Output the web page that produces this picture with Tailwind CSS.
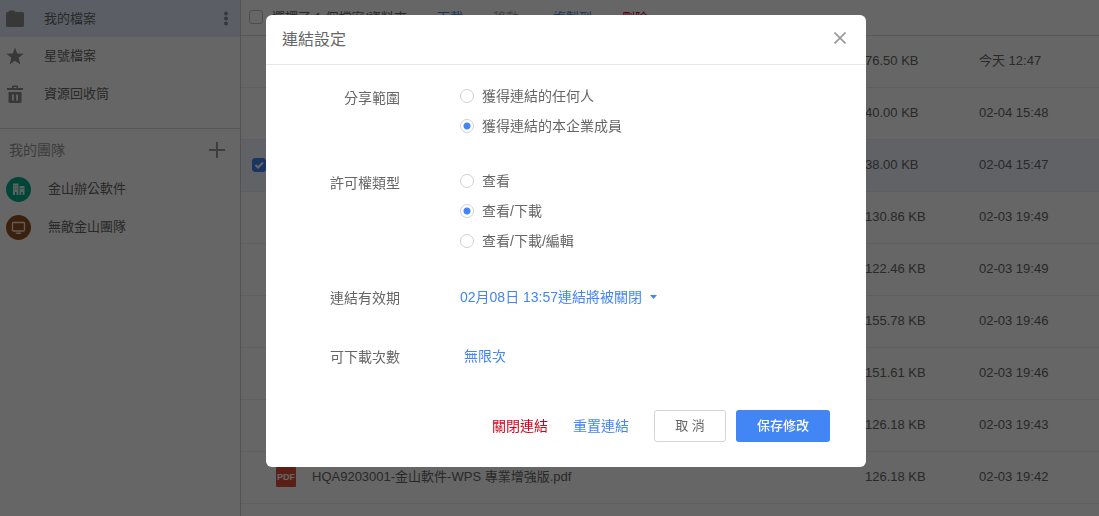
<!DOCTYPE html>
<html lang="zh-Hant">
<head>
<meta charset="utf-8">
<title>我的檔案</title>
<script src="https://cdn.jsdelivr.net/npm/@tailwindcss/browser@4"></script>
</head>
<body class="h-screen overflow-hidden bg-white font-['Liberation_Sans','Noto_Sans_CJK_TC',sans-serif] text-[13px] text-[#666]">
<div class="flex h-full overflow-hidden">
  <aside class="w-60 shrink-0">
    <nav class="border-b border-[#d8d8d8] pb-[15px]">
      <a href="#" class="flex h-[37px] items-center bg-[#e3eefd] pl-1.5 pr-2.5">
        <svg class="mr-5 size-[18px]" viewBox="0 0 18 18" fill="#8c8c8c"><path d="M0 3.500Q0 2 1.500 2h.5l2-1.500h4L9.500 2h7Q18 2 18 3.500v12q0 1.500-1.500 1.500h-15Q0 17 0 15.500z"/></svg>
        <span class="flex-1">我的檔案</span>
        <svg class="h-4 w-2" viewBox="0 0 8 16" fill="#8c8c8c"><circle cx="4" cy="2.500" r="2"/><circle cx="4" cy="7.500" r="2"/><circle cx="4" cy="12.500" r="2"/></svg>
      </a>
      <a href="#" class="flex h-[38px] items-center pl-1.5">
        <svg class="mr-5 size-[18px]" viewBox="0 0 18 18" fill="#8c8c8c"><path d="M9 .5l2.200 6 6.500.3-5.100 4L14.400 17.500 9 13.700l-5.400 3.800 1.800-6.700L.3 6.800l6.500-.3z"/></svg>
        <span>星號檔案</span>
      </a>
      <a href="#" class="flex h-[38px] items-center pl-1.5">
        <svg class="mr-5 size-[18px]" viewBox="0 0 18 18" fill="#8c8c8c"><path fill-rule="evenodd" d="M1 3h5V1.500Q6 .5 7 .5h4q1 0 1 1V3h5v2H1zM7.500 2v1h3V2zM2.500 7h13v9.500q0 1.500-1.500 1.500H4q-1.500 0-1.500-1.500zM6 9.500v6h1.800v-6zM10.200 9.500v6H12v-6z"/></svg>
        <span>資源回收筒</span>
      </a>
    </nav>
    <div class="flex h-[41px] items-center justify-between pl-[9px] pr-[15px] text-sm text-[#999]">
      <h2>我的團隊</h2>
      <button type="button" aria-label="新增團隊"><svg class="size-4" viewBox="0 0 16 16" stroke="#999" stroke-width="2"><path d="M8 0v16M0 8h16"/></svg></button>
    </div>
    <a href="#" class="flex h-[38px] items-center pl-1.5">
      <svg class="mr-[17px] size-[25px]" viewBox="0 0 25 25"><circle cx="12.500" cy="12.500" r="12.500" fill="#00ad8a"/><path fill="#e4f5f0" fill-rule="evenodd" d="M7 6.500h5.500V18H7zM13.500 9h5v9h-5zM8 8.500v1h1v-1zM10.500 8.500v1h1v-1zM8 11.500v1h1v-1zM10.500 11.500v1h1v-1zM9 15v3h1.500v-3zM14.500 11v1h1v-1zM16.500 11v1h1v-1zM15.200 15v3h1.500v-3z"/></svg>
      <span>金山辦公軟件</span>
    </a>
    <a href="#" class="flex h-[38px] items-center pl-1.5">
      <svg class="mr-[17px] size-[25px]" viewBox="0 0 25 25"><circle cx="12.500" cy="12.500" r="12.500" fill="#935322"/><rect x="6.500" y="7.500" width="12" height="8.500" rx="1" fill="none" stroke="#f0e6df" stroke-width="1.300"/><path d="M9.500 17.500h6l-1 1.500h-4z" fill="#f0e6df"/></svg>
      <span>無敵金山團隊</span>
    </a>
  </aside>

  <main class="min-w-0 flex-1 border-l border-[#ccc]">
    <div class="flex h-9 items-center border-b border-[#ddd] pl-2">
      <input type="checkbox" aria-label="全選" class="mb-0.5 size-3.5 shrink-0 appearance-none rounded-[3px] border border-[#c4c4c4]">
      <span class="ml-[9px] w-[165px]">選擇了 1 個檔案/資料夾</span>
      <button type="button" class="w-14 text-left text-[#4285f4]">下載</button>
      <button type="button" class="w-15 text-left text-[#aaa]" disabled>移動</button>
      <button type="button" class="w-[69px] text-left text-[#4285f4]">複製到</button>
      <button type="button" class="text-left text-[#d0021b]">刪除</button>
    </div>
    <table class="w-full table-fixed border-collapse text-left">
      <colgroup><col class="w-[35px]"><col><col class="w-[114px]"><col class="w-[120px]"></colgroup>
      <tbody class="[&_td]:pb-[3px] [&_tr]:h-[52px] [&_tr]:shadow-[inset_0_-1px_0_#ebebeb]">
        <tr><td></td><td></td><td>76.50 KB</td><td>今天 12:47</td></tr>
        <tr><td></td><td></td><td>40.00 KB</td><td>02-04 15:48</td></tr>
        <tr class="bg-[#f0f5ff]"><td class="pl-[11px]"><label class="grid size-3.5"><input type="checkbox" checked aria-label="選取檔案" class="col-start-1 row-start-1 size-3.5 appearance-none rounded-[3px] border border-[#c4c4c4] checked:border-[#4285f4] checked:bg-[#4285f4]"><svg class="pointer-events-none col-start-1 row-start-1 size-3.5" viewBox="0 0 14 14" fill="none" stroke="#fff" stroke-width="2"><path d="M3.500 7L6 9.500 11 4.500"/></svg></label></td><td></td><td>38.00 KB</td><td>02-04 15:47</td></tr>
        <tr><td></td><td></td><td>130.86 KB</td><td>02-03 19:49</td></tr>
        <tr><td></td><td></td><td>122.46 KB</td><td>02-03 19:49</td></tr>
        <tr><td></td><td></td><td>155.78 KB</td><td>02-03 19:46</td></tr>
        <tr><td></td><td></td><td>151.61 KB</td><td>02-03 19:46</td></tr>
        <tr><td></td><td></td><td>126.18 KB</td><td>02-03 19:43</td></tr>
        <tr><td></td><td><div class="flex items-center gap-4"><svg class="size-5" viewBox="0 0 20 20"><rect width="20" height="20" rx="1" fill="#e0523a"/><text x="10" y="13" text-anchor="middle" font-size="9" font-weight="700" fill="#fff">PDF</text></svg><span>HQA9203001-金山軟件-WPS 專業增強版.pdf</span></div></td><td>126.18 KB</td><td>02-03 19:42</td></tr>
      </tbody>
    </table>
  </main>
</div>

<div class="fixed inset-0 flex items-start justify-center bg-black/60 pl-[33px] pt-[15px]">
  <form role="dialog" aria-labelledby="dialog-title" class="w-[600px] rounded-md bg-white text-sm text-[#666]">
    <header class="flex h-[50px] items-center justify-between border-b border-[#e7e7e7] pl-4 pr-5">
      <h1 id="dialog-title" class="text-base">連結設定</h1>
      <button type="button" aria-label="關閉" class="mb-1"><svg class="size-3" viewBox="0 0 12 12" stroke="#999" stroke-width="1.600"><path d="M.5.5l11 11M11.500.5l-11 11"/></svg></button>
    </header>
    <div class="pt-4">
      <fieldset class="flex">
        <legend class="float-left w-[134px] pt-[7px] text-right">分享範圍</legend>
        <div class="ml-15">
          <label class="flex h-[30px] items-center gap-2"><input type="radio" name="scope" class="size-3.5 appearance-none rounded-full border border-[#d0d0d0] checked:bg-[radial-gradient(circle,#4285f4_3px,transparent_4px)]">獲得連結的任何人</label>
          <label class="flex h-[30px] items-center gap-2"><input type="radio" name="scope" checked class="size-3.5 appearance-none rounded-full border border-[#d0d0d0] checked:bg-[radial-gradient(circle,#4285f4_3px,transparent_4px)]">獲得連結的本企業成員</label>
        </div>
      </fieldset>
      <fieldset class="mt-[25px] flex">
        <legend class="float-left w-[134px] pt-[7px] text-right">許可權類型</legend>
        <div class="ml-15">
          <label class="flex h-[30px] items-center gap-2"><input type="radio" name="perm" class="size-3.5 appearance-none rounded-full border border-[#d0d0d0] checked:bg-[radial-gradient(circle,#4285f4_3px,transparent_4px)]">查看</label>
          <label class="flex h-[30px] items-center gap-2"><input type="radio" name="perm" checked class="size-3.5 appearance-none rounded-full border border-[#d0d0d0] checked:bg-[radial-gradient(circle,#4285f4_3px,transparent_4px)]">查看/下載</label>
          <label class="flex h-[30px] items-center gap-2"><input type="radio" name="perm" class="size-3.5 appearance-none rounded-full border border-[#d0d0d0] checked:bg-[radial-gradient(circle,#4285f4_3px,transparent_4px)]">查看/下載/編輯</label>
        </div>
      </fieldset>
      <div class="mt-[31px] flex">
        <span class="w-[134px] pt-px text-right">連結有效期</span>
        <button type="button" class="ml-15 flex h-5 items-center gap-2 text-[#4285f4]">02月08日 13:57連結將被關閉<svg class="h-1 w-[7px]" viewBox="0 0 7 4" fill="#4285f4"><path d="M0 0h7L3.500 4z"/></svg></button>
      </div>
      <div class="mt-[38px] flex">
        <span class="w-[134px] pt-px text-right">可下載次數</span>
        <button type="button" class="ml-16 h-5 text-[#4285f4]">無限次</button>
      </div>
    </div>
    <footer class="mt-[43px] flex items-center justify-end pb-[25px] pr-9">
      <button type="button" class="text-[#d0021b]">關閉連結</button>
      <button type="button" class="ml-[25px] text-[#4285f4]">重置連結</button>
      <button type="button" class="ml-[25px] h-8 w-[72px] rounded-[3px] border border-[#d4d4d4] text-[13px]">取 消</button>
      <button type="submit" class="ml-2.5 h-8 w-[94px] rounded-[3px] bg-[#4285f4] text-[13px] font-medium text-white">保存修改</button>
    </footer>
  </form>
</div>
</body>
</html>
